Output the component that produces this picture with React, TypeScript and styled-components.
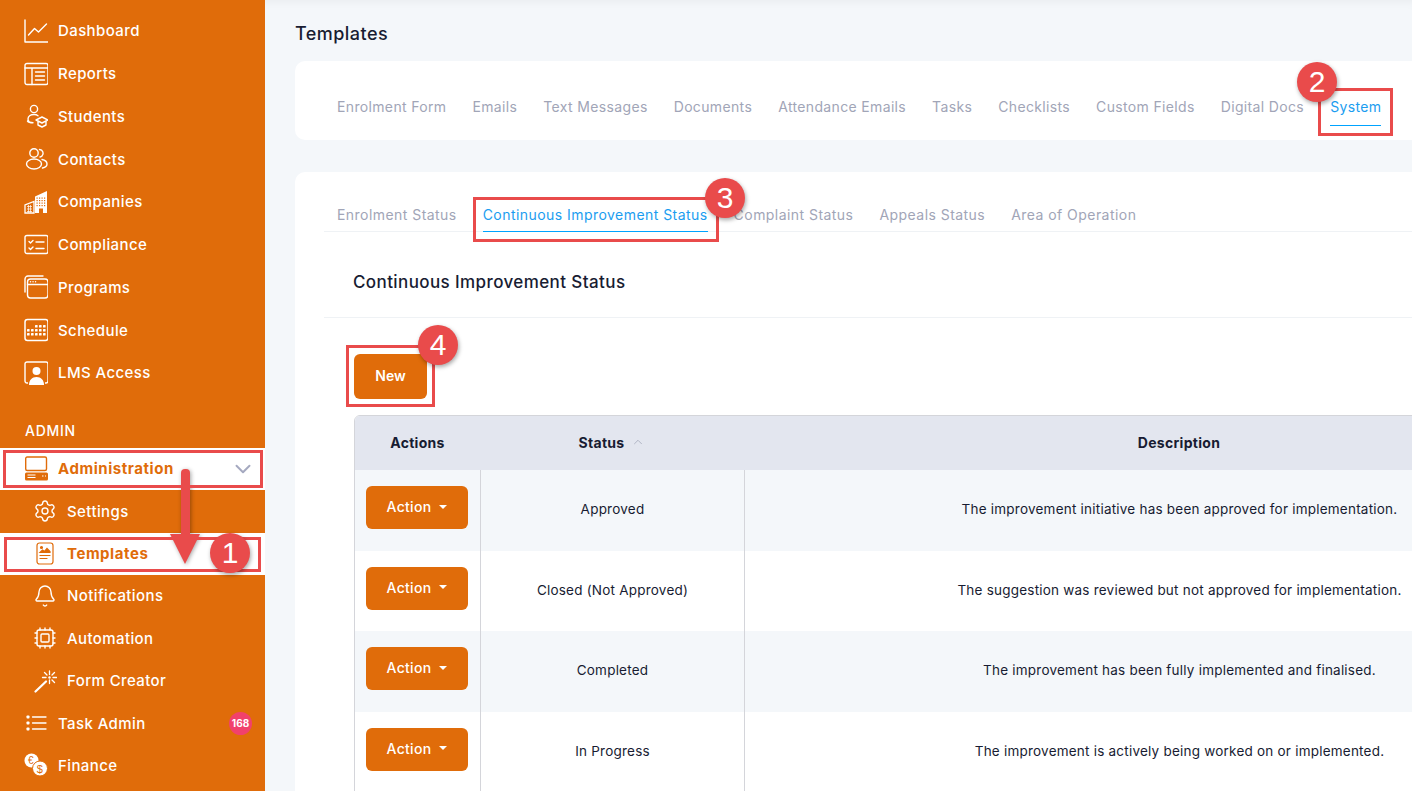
import styled, { createGlobalStyle } from "styled-components";
import { Settings, Bell, Cpu, ChevronDown, ChevronUp } from "lucide-react";
import type { ReactNode } from "react";

const FONT = `Inter, "Open Sans", "Liberation Sans", sans-serif`;

const GlobalStyle = createGlobalStyle`
  html, body { margin: 0; padding: 0; height: 100%; overflow: hidden; }
  body { font-family: ${FONT}; background: #f4f7fa; }
  * { box-sizing: border-box; }
`;

// sidebar icons, drawn in currentColor
const Svg = ({ children }: { children: ReactNode }) => (
  <svg width="24" height="24" viewBox="0 0 24 24" fill="none" stroke="currentColor" strokeWidth="1.4" strokeLinecap="round" strokeLinejoin="round">
    {children}
  </svg>
);

const DashboardIcon = () => (
  <Svg>
    <path d="M1 1v22h23" />
    <path d="M4.500 16l6-6.500 4 3.500 8-8" />
  </Svg>
);
const ReportsIcon = () => (
  <Svg>
    <rect x="1" y="1.500" width="23" height="21" rx="2" />
    <path d="M1 6h23M8 6v16.500M11.500 10h9M11.500 14h9M11.500 18h9" />
  </Svg>
);
const StudentsIcon = () => (
  <Svg>
    <circle cx="10" cy="5" r="3.600" />
    <path d="M5 17.500a3.500 4 0 0 1-1-2.500c0-3 3-4.500 6-4.500 1.500 0 3 .4 4 1.200M3.500 17c1 1.500 3 1.800 5.500 1.800" />
    <path d="M12 16l6-3 6 3-6 3zM14 17.500v3.500l4 2 4-2v-3.500" />
  </Svg>
);
const ContactsIcon = () => (
  <Svg>
    <circle cx="10" cy="6" r="4.200" />
    <path d="M15.500 2.500a3.800 3.800 0 0 1 2.500 6.500 3 3 0 0 1-2 1" />
    <ellipse cx="10" cy="17" rx="7.500" ry="5" />
    <path d="M18 12.500c3 .6 5 2.500 5 4.500s-2 3.500-4.500 4" />
  </Svg>
);
const CompaniesIcon = () => (
  <svg width="24" height="24" viewBox="0 0 24 24" fill="none">
    <path d="M11 23V6.500L23 1v22h-4v-4.500h-4V23z" fill="currentColor" />
    <path d="M1 23v-8l9-3.500V23z" stroke="currentColor" strokeWidth="1.300" />
    <path d="M3 16.500h5M3 19h5M3 21.500h5M4.500 15v7.500M6.500 15v7.500" stroke="currentColor" strokeWidth=".7" />
    <g fill="#e06c0a">
      {[12.500, 15, 17.500, 20].flatMap((x) =>
        [7.500, 10, 12.500, 15].map((y) => <rect key={`${x}-${y}`} x={x} y={y} width="1.200" height="1.200" />)
      )}
    </g>
  </svg>
);
const ComplianceIcon = () => (
  <Svg>
    <rect x="1" y="2.500" width="23" height="18" rx="2" />
    <path d="M5 8.500l1.500 1.500L9 7.500M5 15l1.500 1.500L9 14M12 9h8M12 15.500h8" />
  </Svg>
);
const ProgramsIcon = () => (
  <Svg>
    <rect x="3.500" y="4" width="20.500" height="19" rx="3" />
    <path d="M3.500 9.500h20.500M1 17V4a3 3 0 0 1 3-3h15" />
    <path d="M6.500 6.800h.1M9 6.800h.1M11.500 6.800h.1" />
  </Svg>
);
const ScheduleIcon = () => (
  <svg width="24" height="24" viewBox="0 0 24 24" fill="none" stroke="currentColor" strokeWidth="1.500">
    <rect x="1" y="1.500" width="23" height="21" rx="2.500" />
    <g fill="currentColor" stroke="none">
      {[4, 8, 12, 16, 20].flatMap((x) =>
        [7, 11, 15].map((y) => (y === 7 && x < 11 ? null : <rect key={`${x}-${y}`} x={x - 1} y={y} width="2.600" height="2.600" rx=".6" />))
      )}
    </g>
  </svg>
);
const LmsIcon = () => (
  <svg width="24" height="24" viewBox="0 0 24 24" fill="none" stroke="currentColor" strokeWidth="1.400">
    <path d="M4 22H3a2 2 0 0 1-2-2V3a2 2 0 0 1 2-2h19a2 2 0 0 1 2 2v17a2 2 0 0 1-2 2h-1" />
    <circle cx="12.500" cy="10" r="4" fill="currentColor" stroke="none" />
    <path d="M5 24c0-5 3-8 7.500-8s7.500 3 7.500 8z" fill="currentColor" stroke="none" />
  </svg>
);
const AdminIcon = () => (
  <svg width="24" height="25" viewBox="0 0 24 25" fill="none">
    <rect x="1.700" y="1" width="20.800" height="13.500" rx="1.500" stroke="currentColor" strokeWidth="1.400" />
    <rect x="1" y="16.500" width="23" height="8" rx="1.500" fill="currentColor" />
    <path d="M3.500 19h8M3.500 21.500h8" stroke="#fff" strokeWidth="1" />
    <path d="M18 20h1.500M21 20h1" stroke="#fff" strokeWidth="1.200" />
  </svg>
);
const TemplatesIcon = () => (
  <svg width="18" height="23" viewBox="0 0 18 23" fill="none" stroke="currentColor" strokeWidth="1.200" strokeLinecap="round">
    <rect x="1" y="1" width="16" height="21" rx="2.500" />
    <path d="M4 10.500l2.500-2.500 2 1.500L11 6.500l3 3v1z" fill="currentColor" />
    <circle cx="5.500" cy="5.500" r="1" fill="currentColor" />
    <path d="M4 13.500h10M4 16.500h7" />
  </svg>
);
const WandIcon = () => (
  <svg width="24" height="24" viewBox="0 0 24 24" fill="none" stroke="currentColor" strokeWidth="1.300" strokeLinecap="round">
    <path d="M2.500 22.500L13 12.500" strokeWidth="2.200" />
    <path d="M16.500 2v3.500M16.500 11v3.500M9.500 8.500H13M20 8.500h3.500M11.500 3.500l2.500 2.500M19 11l2.500 2.500M21.500 3.500L19 6" />
    <circle cx="16.500" cy="8.500" r="1.200" fill="currentColor" stroke="none" />
  </svg>
);
const TaskIcon = () => (
  <svg width="21" height="16" viewBox="0 0 21 16" fill="none" stroke="currentColor" strokeWidth="1.300" strokeLinecap="round">
    <path d="M6.500 2h13.500M6.500 8h13.500M6.500 14h13.500" />
    <g fill="currentColor" stroke="none">
      <rect x="0.500" y="0.500" width="3" height="3" rx=".8" />
      <rect x="0.500" y="6.500" width="3" height="3" rx=".8" />
      <rect x="0.500" y="12.500" width="3" height="3" rx=".8" />
    </g>
  </svg>
);
const FinanceIcon = () => (
  <svg width="24" height="24" viewBox="0 0 24 24">
    <circle cx="7.500" cy="7.500" r="7" fill="currentColor" />
    <circle cx="16" cy="15.500" r="7.500" fill="currentColor" stroke="#e06c0a" strokeWidth="1" />
    <text x="7" y="11" fontSize="10" textAnchor="middle" fill="#e06c0a" fontFamily="Liberation Sans">€</text>
    <text x="16" y="19.500" fontSize="11" textAnchor="middle" fill="#e06c0a" fontFamily="Liberation Sans">$</text>
  </svg>
);

const mainNav = [
  { label: "Dashboard", icon: <DashboardIcon /> },
  { label: "Reports", icon: <ReportsIcon /> },
  { label: "Students", icon: <StudentsIcon /> },
  { label: "Contacts", icon: <ContactsIcon /> },
  { label: "Companies", icon: <CompaniesIcon /> },
  { label: "Compliance", icon: <ComplianceIcon /> },
  { label: "Programs", icon: <ProgramsIcon /> },
  { label: "Schedule", icon: <ScheduleIcon /> },
  { label: "LMS Access", icon: <LmsIcon /> },
];

const topTabs = ["Enrolment Form", "Emails", "Text Messages", "Documents", "Attendance Emails", "Tasks", "Checklists", "Custom Fields", "Digital Docs", "System"];
const subTabs = ["Enrolment Status", "Continuous Improvement Status", "Complaint Status", "Appeals Status", "Area of Operation"];

const rows = [
  { status: "Approved", description: "The improvement initiative has been approved for implementation." },
  { status: "Closed (Not Approved)", description: "The suggestion was reviewed but not approved for implementation." },
  { status: "Completed", description: "The improvement has been fully implemented and finalised." },
  { status: "In Progress", description: "The improvement is actively being worked on or implemented." },
];

export default function App() {
  return (
    <Page>
      <GlobalStyle />
      <Sidebar>
        <NavGroup $pitch={42.75}>
          {mainNav.map((item) => (
            <NavRow key={item.label}>
              <IconSlot>{item.icon}</IconSlot>
              {item.label}
            </NavRow>
          ))}
        </NavGroup>
        <SectionLabel>ADMIN</SectionLabel>
        <NavGroup $pitch={42.4}>
          <NavRow $active>
            <IconSlot><AdminIcon /></IconSlot>
            Administration
            <NavChevron><ChevronDown size={26} strokeWidth={1.800} /></NavChevron>
          </NavRow>
          <NavRow $sub>
            <IconSlot><Settings size={24} strokeWidth={1.400} /></IconSlot>
            Settings
          </NavRow>
          <NavRow $sub $active>
            <IconSlot><TemplatesIcon /></IconSlot>
            Templates
          </NavRow>
          <NavRow $sub>
            <IconSlot><Bell size={24} strokeWidth={1.400} /></IconSlot>
            Notifications
          </NavRow>
          <NavRow $sub>
            <IconSlot><Cpu size={24} strokeWidth={1.400} /></IconSlot>
            Automation
          </NavRow>
          <NavRow $sub>
            <IconSlot><WandIcon /></IconSlot>
            Form Creator
          </NavRow>
          <NavRow>
            <IconSlot><TaskIcon /></IconSlot>
            Task Admin
            <Badge>168</Badge>
          </NavRow>
          <NavRow>
            <IconSlot><FinanceIcon /></IconSlot>
            Finance
          </NavRow>
        </NavGroup>
      </Sidebar>

      <Main>
        <PageTitle>Templates</PageTitle>
        <TabCard>
          {topTabs.map((t) => (
            <TopTab key={t} $active={t === "System"}>{t}</TopTab>
          ))}
        </TabCard>
        <ContentCard>
          <SubTabs>
            {subTabs.map((t) => (
              <SubTab key={t} $active={t === "Continuous Improvement Status"}>{t}</SubTab>
            ))}
          </SubTabs>
          <CardHeading>Continuous Improvement Status</CardHeading>
          <Toolbar>
            <PrimaryButton>New</PrimaryButton>
          </Toolbar>
          <Table>
            <HeadRow>
              <HeadCell>Actions</HeadCell>
              <HeadCell>
                Status
                <SortIcon><ChevronUp size={14} strokeWidth={1.300} /></SortIcon>
              </HeadCell>
              <HeadCell>Description</HeadCell>
            </HeadRow>
            {rows.map((r, i) => (
              <BodyRow key={r.status} $striped={i % 2 === 0}>
                <ActionCell>
                  <ActionButton>
                    Action
                    <Caret />
                  </ActionButton>
                </ActionCell>
                <BodyCell>{r.status}</BodyCell>
                <BodyCell>{r.description}</BodyCell>
              </BodyRow>
            ))}
          </Table>
        </ContentCard>
      </Main>

      <Arrow>
        <ArrowStem />
        <ArrowHead />
      </Arrow>
      <Frame $x={3} $y={450} $w={260} $h={38} />
      <Frame $x={4} $y={537} $w={257} $h={35} />
      <Frame $x={1318} $y={88} $w={75} $h={48} />
      <Frame $x={473} $y={197} $w={246} $h={45} />
      <Frame $x={346} $y={345} $w={89} $h={62} />
      <Step $x={230} $y={553}>1</Step>
      <Step $x={1317} $y={82}>2</Step>
      <Step $x={725} $y={198}>3</Step>
      <Step $x={438} $y={345}>4</Step>
    </Page>
  );
}

const Page = styled.div`
  position: relative;
  display: flex;
  width: 1412px;
  height: 791px;
  overflow: hidden;
  background: #f4f7fa;
`;

const Sidebar = styled.aside`
  flex: 0 0 265px;
  display: flex;
  flex-direction: column;
  padding-top: 10px;
  background: #e06c0a;
`;

const NavGroup = styled.div<{ $pitch: number }>`
  display: grid;
  grid-auto-rows: ${(p) => p.$pitch}px;
`;

const NavRow = styled.div<{ $sub?: boolean; $active?: boolean }>`
  display: flex;
  align-items: center;
  gap: 10px;
  padding: 0 14px 1px ${(p) => (p.$sub ? 33 : 24)}px;
  font-size: 15px;
  font-weight: ${(p) => (p.$active ? 700 : 500)};
  letter-spacing: ${(p) => (p.$active ? 0.55 : 0.4)}px;
  color: ${(p) => (p.$active ? "#e06c0a" : "#fff")};
  background: ${(p) => (p.$active ? "#fff" : "transparent")};
`;

const IconSlot = styled.span`
  flex: 0 0 24px;
  display: flex;
  align-items: center;
  justify-content: center;
`;

const NavChevron = styled.span`
  display: flex;
  margin-left: auto;
  margin-right: -5px;
  color: #a5a9c0;
`;

const Badge = styled.span`
  margin-left: auto;
  margin-right: -1px;
  width: 23px;
  height: 23px;
  border-radius: 50%;
  background: #f1416c;
  color: #fff;
  font-size: 10px;
  font-weight: 700;
  letter-spacing: 0;
  display: flex;
  align-items: center;
  justify-content: center;
`;

const SectionLabel = styled.div`
  height: 34.250px;
  margin-top: 19px;
  padding-left: 25px;
  display: flex;
  align-items: center;
  font-size: 14px;
  font-weight: 500;
  letter-spacing: 0.7px;
  color: #fff;
`;

const Main = styled.main`
  flex: 1;
  min-width: 0;
  padding-left: 30px;
  display: flex;
  flex-direction: column;
  box-shadow: inset 0 10px 12px -10px rgba(0, 0, 0, 0.06);
`;

const PageTitle = styled.h1`
  margin: 0;
  flex: 0 0 61px;
  padding-top: 5px;
  display: flex;
  align-items: center;
  font-size: 18px;
  font-weight: 500;
  letter-spacing: 0.45px;
  color: #181c32;
`;

const TabCard = styled.nav`
  flex: 0 0 79px;
  display: flex;
  align-items: flex-end;
  gap: 26px;
  padding: 0 0 14px 42px;
  background: #fff;
  border-radius: 10px 0 0 10px;
`;

const TopTab = styled.span<{ $active?: boolean }>`
  position: relative;
  font-size: 14px;
  line-height: 20px;
  letter-spacing: 0.35px;
  padding-bottom: 8px;
  margin-top: -1px;
  transform: translateY(-1px);
  white-space: nowrap;
  color: ${(p) => (p.$active ? "#1b9df0" : "#a1a5b7")};

  &::after {
    content: "";
    display: ${(p) => (p.$active ? "block" : "none")};
    position: absolute;
    left: 0;
    right: 0;
    bottom: -1px;
    height: 1px;
    background: #00a3ff;
  }
`;

const ContentCard = styled.section`
  flex: 1;
  margin-top: 32px;
  padding-left: 29px;
  background: #fff;
  border-radius: 10px 0 0 0;
  min-height: 0;
`;

const SubTabs = styled.div`
  height: 60px;
  display: flex;
  align-items: flex-end;
  gap: 26px;
  padding-left: 13px;
  border-bottom: 1px solid #eff2f5;
`;

const SubTab = styled.span<{ $active?: boolean }>`
  position: relative;
  font-size: 14px;
  line-height: 20px;
  letter-spacing: 0.45px;
  padding-bottom: 7px;
  margin-bottom: -1px;
  white-space: nowrap;
  color: ${(p) => (p.$active ? "#1b9df0" : "#a1a5b7")};

  &::after {
    content: "";
    display: ${(p) => (p.$active ? "block" : "none")};
    position: absolute;
    left: 0;
    right: 0;
    bottom: 0;
    height: 1px;
    background: #00a3ff;
  }
`;

const CardHeading = styled.h2`
  margin: 0;
  height: 86px;
  padding: 14px 0 0 29px;
  display: flex;
  align-items: center;
  font-size: 17px;
  font-weight: 500;
  letter-spacing: 0.4px;
  color: #181c32;
  border-bottom: 1px solid #eff2f5;
`;

const Toolbar = styled.div`
  height: 97px;
  padding: 36px 0 0 30px;
`;

const PrimaryButton = styled.button`
  width: 73px;
  height: 45px;
  padding: 0 0 2px;
  border: none;
  border-radius: 6px;
  background: #e06c0a;
  color: #fff;
  font-family: ${FONT};
  font-size: 14px;
  font-weight: 600;
`;

const Table = styled.div`
  margin-left: 30px;
  width: 1261px;
  border: 1px solid #d4d5da;
  border-radius: 6px 0 0 0;
  overflow: hidden;
`;

const HeadRow = styled.div`
  display: grid;
  grid-template-columns: 125px 264px 1fr;
  height: 54px;
  background: #e3e6ef;
`;

const HeadCell = styled.div`
  display: flex;
  align-items: center;
  justify-content: center;
  padding-bottom: 2px;
  font-size: 14px;
  font-weight: 700;
  letter-spacing: 0.3px;
  color: #181c32;
`;

const SortIcon = styled.span`
  display: flex;
  margin-left: 7px;
  color: #a1a5b7;
`;

const BodyRow = styled.div<{ $striped: boolean }>`
  display: grid;
  grid-template-columns: 125px 264px 1fr;
  height: 80.500px;
  background: ${(p) => (p.$striped ? "#f4f7fa" : "#fff")};
`;

const BodyCell = styled.div`
  display: flex;
  align-items: center;
  justify-content: center;
  padding-bottom: 2px;
  font-size: 13.500px;
  letter-spacing: 0.22px;
  color: #181c32;
  border-left: 1px solid #d4d5da;
`;

const ActionCell = styled.div`
  padding: 16px 0 0 11px;
`;

const ActionButton = styled.button`
  width: 102px;
  height: 43px;
  padding: 0 0 2px;
  display: flex;
  align-items: center;
  justify-content: center;
  gap: 8px;
  border: none;
  border-radius: 6px;
  background: #e06c0a;
  color: #fff;
  font-family: ${FONT};
  font-size: 14px;
  font-weight: 500;
  letter-spacing: 0.3px;
`;

const Caret = styled.span`
  width: 0;
  height: 0;
  border-left: 4px solid transparent;
  border-right: 4px solid transparent;
  border-top: 4px solid #fff;
`;

const Frame = styled.div<{ $x: number; $y: number; $w: number; $h: number }>`
  position: absolute;
  left: ${(p) => p.$x}px;
  top: ${(p) => p.$y}px;
  width: ${(p) => p.$w}px;
  height: ${(p) => p.$h}px;
  border: 3px solid #e94b4b;
`;

const Step = styled.div<{ $x: number; $y: number }>`
  position: absolute;
  left: ${(p) => p.$x - 20}px;
  top: ${(p) => p.$y - 20}px;
  width: 40px;
  height: 40px;
  border-radius: 50%;
  display: flex;
  align-items: center;
  justify-content: center;
  background: #e94b4b;
  color: #fff;
  font-family: "Liberation Sans", sans-serif;
  font-size: 30px;
  box-shadow: 1px 2px 4px rgba(0, 0, 0, 0.35);
`;

const Arrow = styled.div`
  position: absolute;
  left: 170px;
  top: 469px;
  width: 30px;
  display: flex;
  flex-direction: column;
  align-items: center;
  filter: drop-shadow(1px 1px 2px rgba(0, 0, 0, 0.35));
`;

const ArrowStem = styled.div`
  width: 9px;
  height: 65px;
  background: #e94b4b;
  border-radius: 4px 4px 0 0;
`;

const ArrowHead = styled.div`
  width: 0;
  height: 0;
  border-left: 15px solid transparent;
  border-right: 15px solid transparent;
  border-top: 30px solid #e94b4b;
`;
